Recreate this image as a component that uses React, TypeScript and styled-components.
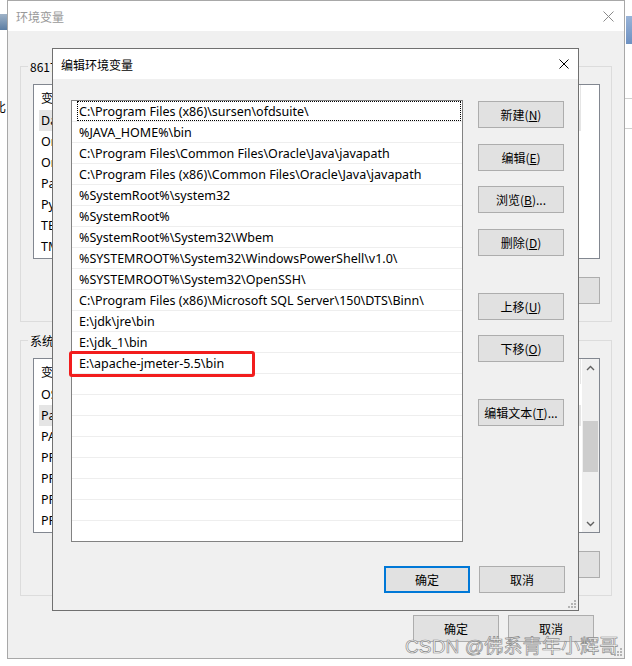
import React from 'react';
import styled, { createGlobalStyle } from 'styled-components';

const UI = `"Noto Sans", "Noto Sans CJK SC", sans-serif`;
const CJK = `"Noto Sans CJK SC", "Noto Sans", sans-serif`;

const Global = createGlobalStyle`
  html, body { margin: 0; padding: 0; background: #fff; }
  body { font-family: ${UI}; font-size: 12px; color: #000; }
  * { box-sizing: border-box; }
`;

const Desktop = styled.div`
  position: relative;
  width: 632px;
  height: 666px;
  overflow: hidden;
  background: #fff;
`;

const DeskIcon = styled.div`
  position: absolute;
  left: 0;
  top: 14px;
  width: 7px;
  height: 16px;
  background: linear-gradient(#9fb3c8, #5b7da3);
`;

const DeskIconRight = styled.div`
  position: absolute;
  left: 626px;
  top: 16px;
  width: 6px;
  height: 28px;
  background: linear-gradient(#6d93c7, #2f62a8);
  opacity: 0.7;
`;

const DeskLine = styled.div<{ $top: number }>`
  position: absolute;
  left: 625px;
  top: ${p => p.$top}px;
  width: 7px;
  height: 1px;
  background: #d0d0d0;
`;

const DeskGlyph = styled.div`
  position: absolute;
  left: -6px;
  top: 98px;
  font-family: ${CJK};
  font-size: 12px;
`;

const Window = styled.div<{ $active?: boolean }>`
  position: absolute;
  display: flex;
  flex-direction: column;
  background: #f0f0f0;
  border: 1px solid ${p => (p.$active ? '#707070' : '#a8a8a8')};
`;

const OuterWindow = styled(Window)`
  left: 7px;
  top: 0;
  width: 618px;
  height: 659px;
`;

const InnerWindow = styled(Window)`
  left: 52px;
  top: 48px;
  width: 527px;
  height: 563px;
`;

const TitleBar = styled.div`
  height: 30px;
  flex: none;
  background: #fff;
  display: flex;
  align-items: center;
  padding-left: 8px;
`;

const Title = styled.div<{ $active?: boolean }>`
  flex: 1;
  font-family: ${CJK};
  font-size: 12px;
  color: ${p => (p.$active ? '#000' : '#999')};
`;

const CloseIcon = styled.svg`
  flex: none;
`;

const OuterBody = styled.div`
  flex: 1;
  display: flex;
  flex-direction: column;
  padding: 35px 12px 0 12px;
`;

const GroupBox = styled.div`
  position: relative;
  border: 1px solid #dcdcdc;
  padding: 17px 11px 0 12px;
  display: flex;
  flex-direction: column;
  gap: 18px;
`;

const GroupGap = styled.div`
  height: 18px;
  flex: none;
`;

const Legend = styled.span`
  position: absolute;
  left: 7px;
  top: -9px;
  padding: 0 2px;
  background: #f0f0f0;
  font-family: ${CJK};
  font-size: 12px;
  line-height: 17px;
  white-space: nowrap;
`;

const ListView = styled.div`
  height: 175px;
  flex: none;
  border: 1px solid #828790;
  background: #fff;
  display: flex;
  overflow: hidden;
`;

const ListBody = styled.div`
  flex: 1;
  min-width: 0;
  display: flex;
  flex-direction: column;
  overflow: hidden;
`;

const HeaderRow = styled.div`
  height: 25px;
  flex: none;
  width: 547px;
  display: flex;
  font-family: ${CJK};
`;

const HeaderCell = styled.div<{ $w: number }>`
  width: ${p => p.$w}px;
  flex: none;
  display: flex;
  align-items: center;
  padding-left: 7px;
  border-right: 1px solid #e5e5e5;
`;

const VarRow = styled.div<{ $selected?: boolean }>`
  height: 21px;
  flex: none;
  width: 542px;
  margin-left: 5px;
  display: flex;
  align-items: center;
  white-space: nowrap;
  font-size: 12.5px;
  background: ${p => (p.$selected ? '#e5e5e5' : 'transparent')};
`;

const VarCell = styled.div<{ $w: number }>`
  width: ${p => p.$w}px;
  flex: none;
  padding-left: 2px;
  overflow: hidden;
`;

const ScrollBar = styled.div`
  width: 17px;
  flex: none;
  background: #f0f0f0;
  display: flex;
  flex-direction: column;
`;

const ScrollArrow = styled.div`
  height: 17px;
  flex: none;
  display: flex;
  align-items: center;
  justify-content: center;
`;

const ScrollTrack = styled.div`
  flex: 1;
  display: flex;
  flex-direction: column;
  padding-top: 45px;
`;

const Thumb = styled.div`
  height: 51px;
  margin: 0 1px;
  background: #cdcdcd;
`;

const ButtonRow = styled.div<{ $pr?: number }>`
  display: flex;
  justify-content: flex-end;
  gap: 9px;
  padding-right: ${p => p.$pr ?? 0}px;
`;

const GroupButtons = styled(ButtonRow)`
  margin-bottom: 17px;
`;

const Btn = styled.button<{ $default?: boolean }>`
  width: 86px;
  height: 27px;
  flex: none;
  padding: 0;
  margin: 0;
  background: #e1e1e1;
  border: ${p => (p.$default ? '2px solid #0078d7' : '1px solid #adadad')};
  font-family: ${CJK};
  font-size: 12px;
  color: #000;
  display: flex;
  align-items: center;
  justify-content: center;
  white-space: nowrap;
  u {
    text-underline-offset: 1px;
  }
`;

const OuterFooter = styled(ButtonRow)`
  margin-top: 19px;
  padding-right: 18px;
`;

const Grip = styled.svg`
  position: absolute;
  right: 1px;
  bottom: 1px;
`;

const InnerBody = styled.div`
  flex: 1;
  display: flex;
  flex-direction: column;
  padding: 21px 13px 0 18px;
`;

const MainRow = styled.div`
  display: flex;
  gap: 15px;
  height: 442px;
  flex: none;
`;

const ListWrap = styled.div`
  position: relative;
  width: 392px;
  height: 442px;
  flex: none;
`;

const EditList = styled.div`
  width: 100%;
  height: 100%;
  border: 1px solid #828282;
  background: #fff;
  overflow: hidden;
  display: flex;
  flex-direction: column;
`;

const PathRow = styled.div`
  height: 21px;
  flex: none;
  display: flex;
  border-bottom: 1px solid #eeeeee;
`;

const PathText = styled.div<{ $focus?: boolean }>`
  flex: 1;
  margin-left: 5px;
  margin-right: 1px;
  padding-left: 1px;
  padding-top: 1px;
  display: flex;
  align-items: center;
  white-space: nowrap;
  font-family: ${UI};
  font-size: 12.5px;
  border: 1px dotted ${p => (p.$focus ? '#000' : 'transparent')};
`;

const Annotation = styled.div`
  position: absolute;
  left: -2px;
  top: 251px;
  width: 186px;
  height: 26px;
  border: 3px solid #f21d1d;
  border-radius: 3px;
  pointer-events: none;
`;

const SideButtons = styled.div`
  width: 86px;
  flex: none;
  display: flex;
  flex-direction: column;
  gap: 15.7px;
  padding-top: 1px;
`;

const SideBtn = styled(Btn)<{ $gapBefore?: boolean }>`
  margin-top: ${p => (p.$gapBefore ? '21px' : '0')};
`;

const InnerFooter = styled(ButtonRow)`
  margin-top: 24px;
  padding-right: 0;
`;

const Watermark = styled.div`
  position: absolute;
  left: 405px;
  top: 636px;
  font-family: "Liberation Sans", "Noto Sans CJK SC", sans-serif;
  font-size: 19.2px;
  line-height: 22px;
  color: rgba(255, 255, 255, 0.85);
  -webkit-text-stroke: 0.7px #8c8c8c;
  white-space: nowrap;
  pointer-events: none;
`;

const Close = ({ color, size, w }: { color: string; size: number; w: number }) => (
  <CloseIcon width={size} height={size} viewBox={`0 0 ${size} ${size}`} style={{ marginRight: w }}>
    <path d={`M0.5 0.5 L${size - 0.5} ${size - 0.5} M${size - 0.5} 0.5 L0.5 ${size - 0.5}`} stroke={color} strokeWidth="1" fill="none" />
  </CloseIcon>
);

const GripDots = () => (
  <Grip width="10" height="10" viewBox="0 0 10 10">
    {[
      [7, 1],
      [4, 4],
      [7, 4],
      [1, 7],
      [4, 7],
      [7, 7],
    ].map(([x, y], i) => (
      <rect key={i} x={x} y={y} width="2" height="2" fill="#b4b4b4" />
    ))}
  </Grip>
);

const Chevron = ({ up }: { up?: boolean }) => (
  <svg width="9" height="6" viewBox="0 0 9 6">
    <path d={up ? 'M1 5 L4.5 1.5 L8 5' : 'M1 1 L4.5 4.5 L8 1'} stroke="#606060" strokeWidth="1.4" fill="none" />
  </svg>
);

const Mn = ({ pre, key_, post = '' }: { pre: string; key_: string; post?: string }) => (
  <span>
    {pre}(<u>{key_}</u>){post}
  </span>
);

const userVars = [
  ['DataGrip', 'D:\\JetBrains\\DataGrip\\bin;'],
  ['OneDrive', 'C:\\Users\\86177\\OneDrive'],
  ['OneDriveConsumer', 'C:\\Users\\86177\\OneDrive'],
  ['Path', 'C:\\Users\\86177\\AppData\\Local\\Microsoft\\WindowsApps;'],
  ['PyCharm', 'D:\\JetBrains\\PyCharm\\bin;'],
  ['TEMP', 'C:\\Users\\86177\\AppData\\Local\\Temp'],
  ['TMP', 'C:\\Users\\86177\\AppData\\Local\\Temp'],
];

const sysVars = [
  ['OS', 'Windows_NT'],
  ['Path', 'C:\\Program Files (x86)\\sursen\\ofdsuite\\;%JAVA_HOME%\\bin;'],
  ['PATHEXT', '.COM;.EXE;.BAT;.CMD;.VBS;.VBE;.JS;.JSE;.WSF;.WSH;.MSC'],
  ['PROCESSOR_ARCHITECTURE', 'AMD64'],
  ['PROCESSOR_IDENTIFIER', 'Intel64 Family 6 Model 140 Stepping 1, GenuineIntel'],
  ['PROCESSOR_LEVEL', '6'],
  ['PROCESSOR_REVISION', '8c01'],
];

const paths = [
  'C:\\Program Files (x86)\\sursen\\ofdsuite\\',
  '%JAVA_HOME%\\bin',
  'C:\\Program Files\\Common Files\\Oracle\\Java\\javapath',
  'C:\\Program Files (x86)\\Common Files\\Oracle\\Java\\javapath',
  '%SystemRoot%\\system32',
  '%SystemRoot%',
  '%SystemRoot%\\System32\\Wbem',
  '%SYSTEMROOT%\\System32\\WindowsPowerShell\\v1.0\\',
  '%SYSTEMROOT%\\System32\\OpenSSH\\',
  'C:\\Program Files (x86)\\Microsoft SQL Server\\150\\DTS\\Binn\\',
  'E:\\jdk\\jre\\bin',
  'E:\\jdk_1\\bin',
  'E:\\apache-jmeter-5.5\\bin',
  '',
  '',
  '',
  '',
  '',
  '',
  '',
  '',
  '',
];

const VarList = ({ rows, selected, scroll }: { rows: string[][]; selected: number; scroll?: boolean }) => (
  <ListView>
    <ListBody>
      <HeaderRow>
        <HeaderCell $w={150}>变量</HeaderCell>
        <HeaderCell $w={397}>值</HeaderCell>
      </HeaderRow>
      {rows.map((r, i) => (
        <VarRow key={i} $selected={i === selected}>
          <VarCell $w={150}>{r[0]}</VarCell>
          <VarCell $w={390}>{r[1]}</VarCell>
        </VarRow>
      ))}
    </ListBody>
    {scroll && (
      <ScrollBar>
        <ScrollArrow>
          <Chevron up />
        </ScrollArrow>
        <ScrollTrack>
          <Thumb />
        </ScrollTrack>
        <ScrollArrow>
          <Chevron />
        </ScrollArrow>
      </ScrollBar>
    )}
  </ListView>
);

export default function App() {
  return (
    <Desktop>
      <Global />
      <DeskIcon />
      <DeskIconRight />
      <DeskLine $top={98} />
      <DeskLine $top={128} />
      <DeskGlyph>比</DeskGlyph>

      <OuterWindow>
        <TitleBar>
          <Title>环境变量</Title>
          <Close color="#8a8a8a" size={11} w={10} />
        </TitleBar>
        <OuterBody>
          <GroupBox>
            <Legend>86177 的用户变量(U)</Legend>
            <VarList rows={userVars} selected={0} />
            <GroupButtons>
              <Btn>
                <Mn pre="新建" key_="N" post="..." />
              </Btn>
              <Btn>
                <Mn pre="编辑" key_="E" post="..." />
              </Btn>
              <Btn>
                <Mn pre="删除" key_="D" />
              </Btn>
            </GroupButtons>
          </GroupBox>
          <GroupGap />
          <GroupBox>
            <Legend>系统变量(S)</Legend>
            <VarList rows={sysVars} selected={1} scroll />
            <GroupButtons>
              <Btn>
                <Mn pre="新建" key_="W" post="..." />
              </Btn>
              <Btn>
                <Mn pre="编辑" key_="I" post="..." />
              </Btn>
              <Btn>
                <Mn pre="删除" key_="L" />
              </Btn>
            </GroupButtons>
          </GroupBox>
          <OuterFooter>
            <Btn>确定</Btn>
            <Btn>取消</Btn>
          </OuterFooter>
        </OuterBody>
        <GripDots />
      </OuterWindow>

      <InnerWindow $active>
        <TitleBar>
          <Title $active>编辑环境变量</Title>
          <Close color="#000" size={10} w={9} />
        </TitleBar>
        <InnerBody>
          <MainRow>
            <ListWrap>
              <EditList>
                {paths.map((p, i) => (
                  <PathRow key={i}>
                    <PathText $focus={i === 0}>{p}</PathText>
                  </PathRow>
                ))}
              </EditList>
              <Annotation />
            </ListWrap>
            <SideButtons>
              <SideBtn>
                <Mn pre="新建" key_="N" />
              </SideBtn>
              <SideBtn>
                <Mn pre="编辑" key_="E" />
              </SideBtn>
              <SideBtn>
                <Mn pre="浏览" key_="B" post="..." />
              </SideBtn>
              <SideBtn>
                <Mn pre="删除" key_="D" />
              </SideBtn>
              <SideBtn $gapBefore>
                <Mn pre="上移" key_="U" />
              </SideBtn>
              <SideBtn>
                <Mn pre="下移" key_="O" />
              </SideBtn>
              <SideBtn $gapBefore>
                <Mn pre="编辑文本" key_="T" post="..." />
              </SideBtn>
            </SideButtons>
          </MainRow>
          <InnerFooter>
            <Btn $default>确定</Btn>
            <Btn>取消</Btn>
          </InnerFooter>
        </InnerBody>
        <GripDots />
      </InnerWindow>

      <Watermark>CSDN @佛系青年小辉哥</Watermark>
    </Desktop>
  );
}
